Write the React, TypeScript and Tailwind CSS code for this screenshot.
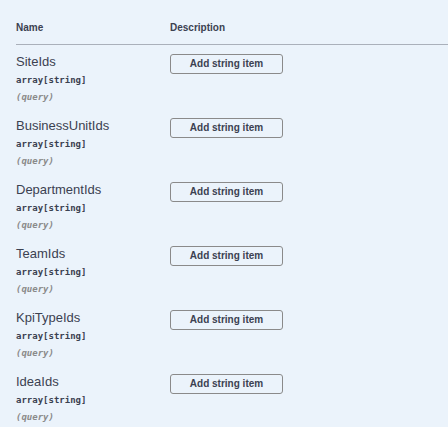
import React from "react";

const names = ["SiteIds", "BusinessUnitIds", "DepartmentIds", "TeamIds", "KpiTypeIds", "IdeaIds"];
const mono = '"DejaVu Sans Mono", "Liberation Mono", monospace';

export default function App() {
  return (
    <div
      className="w-[448px] h-[427px] bg-[#ebf3fb] pl-4 overflow-hidden text-[#3b4151]"
      style={{ fontFamily: '"Liberation Sans", Arial, sans-serif' }}
    >
      <div className="flex pt-[22px] pb-[10px] border-b border-[#aab0ba] text-[10px] leading-[12px] font-bold">
        <div className="w-[154px]">Name</div>
        <div>Description</div>
      </div>
      {names.map((n) => (
        <div key={n} className="flex items-start pt-[9px] h-[64px]">
          <div className="w-[154px] flex flex-col">
            <div className="text-[13px] leading-[16px]">{n}</div>
            <div className="mt-1 text-[9px] leading-[12px] font-bold" style={{ fontFamily: mono }}>
              array[string]
            </div>
            <div className="mt-[5px] text-[9px] leading-[12px] italic font-semibold text-[#8a8a8a]" style={{ fontFamily: mono }}>
              (query)
            </div>
          </div>
          <button className="block w-[113px] h-[20px] border border-[#8a8a8a] rounded-[3px] text-[10px] font-bold leading-[18px] text-[#3b4151] bg-transparent">
            Add string item
          </button>
        </div>
      ))}
    </div>
  );
}
